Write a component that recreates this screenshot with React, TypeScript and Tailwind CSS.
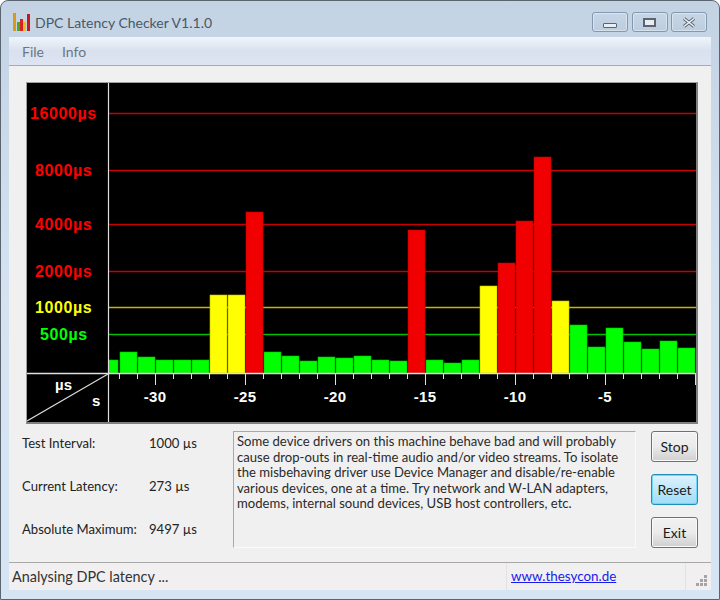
import React from 'react';

const font = { fontFamily: '"Liberation Sans", Arial, sans-serif' };

// tops of the latency bars, left to right, base line is y=373
const bars: [number, string][] = [
  [360, 'g'], [352, 'g'], [357, 'g'], [360, 'g'], [360, 'g'], [360, 'g'],
  [295, 'y'], [295, 'y'], [212, 'r'],
  [352, 'g'], [356, 'g'], [361, 'g'], [357, 'g'], [358, 'g'], [356, 'g'], [360, 'g'], [361, 'g'],
  [230, 'r'],
  [360, 'g'], [363, 'g'], [360, 'g'],
  [286, 'y'], [263, 'r'], [221, 'r'], [157, 'r'], [301, 'y'],
  [325, 'g'], [347, 'g'], [328, 'g'], [342, 'g'], [349, 'g'], [341, 'g'], [348, 'g'],
];

const fills: Record<string, string> = { g: '#00ff00', y: '#ffff00', r: '#f00000' };
const edges: Record<string, string> = { g: '#00c000', y: '#c0c000', r: '#c00000' };

const grid = [
  { y: 113, label: '16000µs', color: '#ff0000', line: '#c80000', x: 30 },
  { y: 170, label: '8000µs', color: '#ff0000', line: '#c80000', x: 35 },
  { y: 224, label: '4000µs', color: '#ff0000', line: '#c80000', x: 35 },
  { y: 271, label: '2000µs', color: '#ff0000', line: '#c80000', x: 35 },
  { y: 307, label: '1000µs', color: '#ffff00', line: '#c0b800', x: 35 },
  { y: 334, label: '500µs', color: '#00ff00', line: '#00c000', x: 40 },
];

function Chart() {
  return (
    <div className="h-[342px] border-t border-l border-t-[#a0a0a0] border-l-[#a0a0a0] border-r-2 border-b-2 border-r-[#808080] border-b-[#808080] bg-black">
      <svg width="669" height="339" viewBox="27 83 669 339" style={font} className="block">
        {grid.map((g) => (
          <line key={g.y} x1={108} x2={696} y1={g.y + 0.5} y2={g.y + 0.5} stroke={g.line} strokeWidth={1.5} />
        ))}
        {grid.map((g) => (
          <text key={g.label} x={g.x} y={g.y + 6} fill={g.color} fontSize={16} fontWeight="bold" letterSpacing={0.6}>
            {g.label}
          </text>
        ))}
        {bars.map(([top, c], i) => {
          const x = i === 0 ? 109 : 102 + 18 * i;
          const w = i === 0 ? 9 : 17;
          return (
            <rect key={i} x={x} y={top} width={w} height={373 - top} fill={fills[c]} stroke={edges[c]} strokeWidth={0.6} />
          );
        })}
        {Array.from({ length: 33 }).map((_, i) => {
          const x = 119 + 18 * i;
          const long = (x - 155) % 90 === 0;
          return <line key={i} x1={x} x2={x} y1={374} y2={long ? 385 : 379} stroke="#e0e0e0" shapeRendering="crispEdges" />;
        })}
        <line x1={27} x2={696} y1={373.5} y2={373.5} stroke="#e0e0e0" strokeWidth={1.4} />
        <line x1={108.5} x2={108.5} y1={83} y2={422} stroke="#e0e0e0" strokeWidth={1.2} />
        <line x1={27} y1={421} x2={108} y2={374} stroke="#d8d8d8" strokeWidth={1.2} />
        <text x={55} y={390} fill="#fff" fontSize={15} fontWeight="bold">µs</text>
        <text x={92} y={406} fill="#fff" fontSize={15} fontWeight="bold">s</text>
        {[-30, -25, -20, -15, -10, -5].map((n, i) => (
          <text key={n} x={155 + 90 * i} y={402} fill="#fff" fontSize={15} fontWeight="bold" textAnchor="middle" letterSpacing={0.3}>
            {n}
          </text>
        ))}
      </svg>
    </div>
  );
}

function CaptionButton({ children }: { children: React.ReactNode }) {
  return (
    <div className="w-[36px] h-[20px] rounded-[3px] border border-[#8397ad] bg-gradient-to-b from-[#c6d6e7] to-[#bccde0] shadow-[inset_0_0_0_1px_rgba(255,255,255,0.4)] flex items-center justify-center">
      {children}
    </div>
  );
}

function PushButton({ label, active }: { label: string; active?: boolean }) {
  return (
    <div
      className={
        active
          ? 'w-[47px] h-[31px] rounded-[3px] border border-[#1f8fb5] bg-gradient-to-b from-[#def3fd] to-[#9fdcf8] shadow-[inset_0_0_0_1px_#6fd8fa] flex items-center justify-center text-[14px] text-[#1a1a1a]'
          : 'w-[47px] h-[31px] rounded-[3px] border border-[#707070] bg-gradient-to-b from-[#f2f2f2] via-[#ebebeb] to-[#cfcfcf] shadow-[inset_0_0_0_1px_#fafafa] flex items-center justify-center text-[14px] text-[#1a1a1a]'
      }
    >
      {label}
    </div>
  );
}

export default function App() {
  return (
    <div
      className="w-[720px] h-[600px] bg-white overflow-hidden"
      style={{ fontFamily: 'Lato, "Noto Sans", sans-serif' }}
    >
      <div className="h-full flex flex-col rounded-t-[8px] border border-[#5a6570] bg-gradient-to-b from-[#c3d3e4] via-[#d5e3f1] to-[#d6e5f4] px-[8px] pb-[9px]">
        <div className="h-[36px] shrink-0 flex items-start justify-between">
          <div className="flex items-start gap-[4px] pl-[4px] pt-[12px]">
            <svg width="18" height="18" viewBox="0 0 18 18">
              <rect x="0" y="0" width="3" height="18" fill="#d99a1c" />
              <rect x="4" y="9" width="3" height="9" fill="#3fae2a" />
              <rect x="7" y="6" width="3" height="12" fill="#e02020" />
              <rect x="10" y="9" width="3" height="9" fill="#e8c020" />
              <rect x="14" y="1" width="3" height="17" fill="#c81818" />
            </svg>
            <span className="text-[14px] leading-[20px] text-[#4a5866]">DPC Latency Checker V1.1.0</span>
          </div>
          <div className="flex gap-[3.5px] pr-[4px] pt-[11px]">
            <CaptionButton>
              <div className="w-[14px] h-[5px] mt-[6px] rounded-[1px] border border-[#5b6470] bg-[#e8eef4]" />
            </CaptionButton>
            <CaptionButton>
              <div className="w-[13px] h-[9px] border-2 border-[#5b6470] bg-[#e8eef4]" />
            </CaptionButton>
            <CaptionButton>
              <svg width="14" height="11" viewBox="0 0 14 11">
                <path d="M2 1.5 L12 9.5 M12 1.5 L2 9.5" stroke="#5b6470" strokeWidth="3.4" />
                <path d="M2 1.5 L12 9.5 M12 1.5 L2 9.5" stroke="#eef2f6" strokeWidth="1.6" />
              </svg>
            </CaptionButton>
          </div>
        </div>

        <div className="h-[29px] shrink-0 flex items-center gap-[18px] px-[13px] border-b border-[#a9a9b4] bg-gradient-to-b from-[#f0f5fb] via-[#d9e1ef] to-[#dde4f2] text-[14px] text-[#6b7684]">
          <span>File</span>
          <span>Info</span>
        </div>

        <div className="flex-1 flex flex-col bg-[#f0f0f0] pt-[16px] pl-[17px] pr-[13px] text-[13.1px] text-[#222]">
          <Chart />
          <div className="flex mt-[7px]">
            <div className="w-[211px] flex flex-col gap-[24px] pt-[3px] -ml-[4px]">
              {[
                ['Test Interval:', '1000 µs'],
                ['Current Latency:', '273 µs'],
                ['Absolute Maximum:', '9497 µs'],
              ].map(([k, v]) => (
                <div key={k} className="flex h-[19px] items-center">
                  <span className="w-[127px]">{k}</span>
                  <span>{v}</span>
                </div>
              ))}
            </div>
            <div className="w-[403px] h-[117px] border border-t-[#a8a8a8] border-l-[#a8a8a8] border-r-[#fafafa] border-b-[#fafafa] pl-[3px] pt-[2px] leading-[15.6px] text-[#2a2a2a] whitespace-nowrap">
              Some device drivers on this machine behave bad and will probably<br />
              cause drop-outs in real-time audio and/or video streams. To isolate<br />
              the misbehaving driver use Device Manager and disable/re-enable<br />
              various devices, one at a time. Try network and W-LAN adapters,<br />
              modems, internal sound devices, USB host controllers, etc.
            </div>
            <div className="ml-[15px] flex flex-col gap-[12px]">
              <PushButton label="Stop" />
              <PushButton label="Reset" active />
              <PushButton label="Exit" />
            </div>
          </div>
        </div>

        <div className="h-[28px] shrink-0 flex items-center border-t border-[#a8a8a8] bg-[#f1efef] text-[#333]">
          <div className="w-[497px] pl-[3px] pt-[1px] text-[14.4px]">Analysing DPC latency ...</div>
          <div className="w-[180px] h-full flex items-center pl-[4px] border-l border-r border-[#e2e2e2] bg-[#f0f0f0] text-[13.4px]">
            <span className="text-[#1a1aee] underline">www.thesycon.de</span>
          </div>
          <svg width="24" height="27" viewBox="0 0 24 27" className="block">
            <g fill="#a4a4a4">
              <rect x="18" y="12" width="3" height="3" />
              <rect x="14" y="16" width="3" height="3" />
              <rect x="18" y="16" width="3" height="3" />
              <rect x="10" y="20" width="3" height="3" />
              <rect x="14" y="20" width="3" height="3" />
              <rect x="18" y="20" width="3" height="3" />
            </g>
          </svg>
        </div>
      </div>
    </div>
  );
}
